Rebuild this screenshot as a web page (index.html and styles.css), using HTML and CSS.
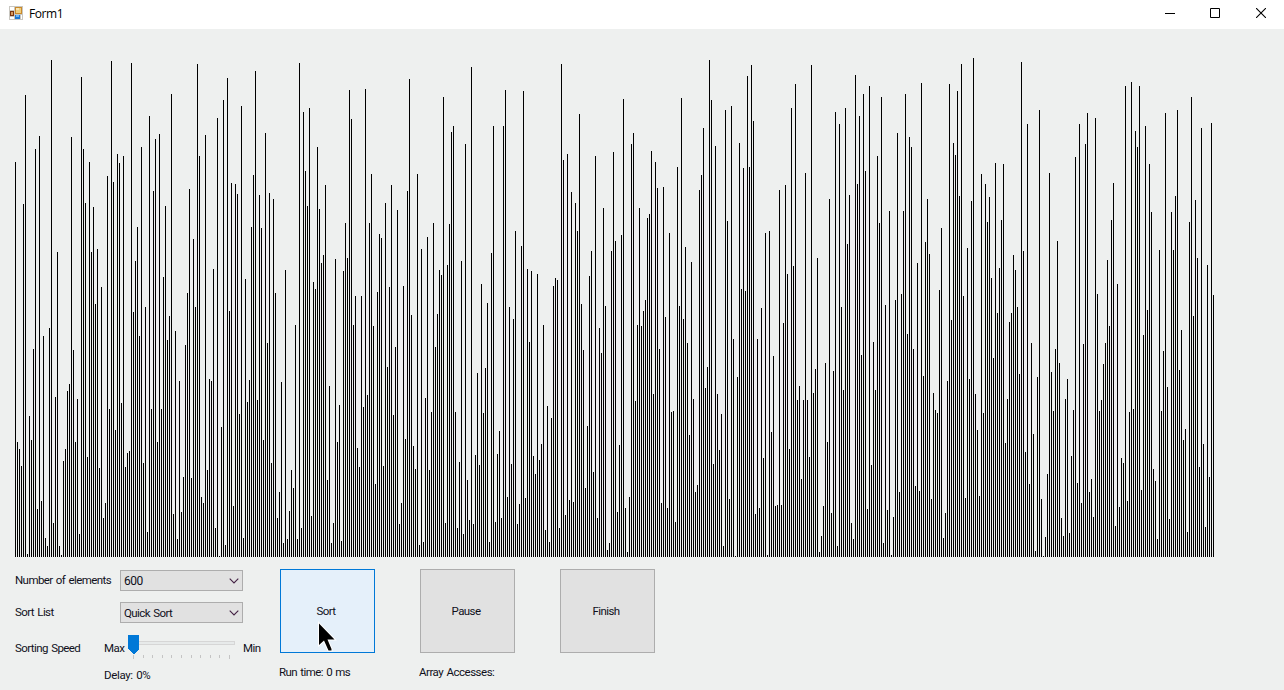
FILE: index.html
```html
<!DOCTYPE html>
<html lang="en">
<head>
<meta charset="utf-8">
<title>Form1</title>
<link rel="stylesheet" href="styles.css">
</head>
<body>
<div class="window">
  <header class="titlebar">
    <svg class="app-icon" width="14" height="14" viewBox="0 0 14 14" shape-rendering="crispEdges">
      <rect width="14" height="14" fill="#c9c7c1"/>
      <rect x="1" y="1" width="4" height="3" fill="#fff"/>
      <rect x="1" y="11" width="4" height="2" fill="#fff"/>
      <rect x="6" y="1" width="7" height="7" fill="#c98a2c"/>
      <rect x="7" y="2" width="5" height="5" fill="#f0cd7c"/>
      <rect x="7" y="2" width="3" height="2" fill="#fae6b4"/>
      <rect x="1" y="5" width="4" height="5" fill="#7a3510"/>
      <rect x="2" y="6" width="2" height="3" fill="#d89a5c"/>
      <rect x="6" y="9" width="5" height="4" fill="#1c76d2"/>
      <rect x="7" y="9" width="3" height="2" fill="#6db4f2"/>
      <rect x="12" y="9" width="1" height="4" fill="#fff"/>
    </svg>
    <span class="title">Form1</span>
    <div class="caption-buttons">
      <svg width="10" height="10" viewBox="0 0 10 10"><path d="M0 5.5H10" stroke="#000"/></svg>
      <svg width="10" height="10" viewBox="0 0 10 10"><path d="M.5 .5H9.5V9.5H.5Z" fill="none" stroke="#000"/></svg>
      <svg width="10" height="10" viewBox="0 0 10 10"><path d="M0 0L10 10M10 0L0 10" stroke="#000" stroke-width="1.1"/></svg>
    </div>
  </header>
  <main>
    <div class="plot" id="plot"></div>
    <section class="controls">
      <div class="settings">
        <div class="row">
          <span class="label name">Number of elements</span>
          <div class="combo"><span class="num">600</span><svg width="10" height="6" viewBox="0 0 10 6"><path d="M.7 .7L5 5L9.3 .7" fill="none" stroke="#442244" stroke-width="1.1"/></svg></div>
        </div>
        <div class="row">
          <span class="label list">Sort List</span>
          <div class="combo"><span class="quick">Quick Sort</span><svg width="10" height="6" viewBox="0 0 10 6"><path d="M.7 .7L5 5L9.3 .7" fill="none" stroke="#442244" stroke-width="1.1"/></svg></div>
        </div>
        <div class="speed">
          <span class="label speed-name">Sorting Speed</span>
          <span class="max">Max</span>
          <svg class="slider" width="110" height="26" viewBox="0 0 110 26" shape-rendering="crispEdges">
            <rect x="1.5" y="6.5" width="105" height="3" fill="#e7eaea" stroke="#d6d6d6"/>
            <path d="M5.5 20v4M15.5 20v3M24.5 20v3M34.5 20v3M43.5 20v3M53.5 20v3M63.5 20v3M72.5 20v3M82.5 20v3M91.5 20v3M101.5 20v4" stroke="#c4c4c4"/>
            <path d="M0 0H11V14L6 19H5L0 14Z" fill="#0078d7"/>
          </svg>
          <span class="min">Min</span>
        </div>
        <div class="delay"><span>Delay: 0%</span></div>
      </div>
      <div class="actions">
        <div class="action">
          <button class="button hot">Sort</button>
          <span class="status run">Run time: 0 ms</span>
          <svg class="cursor" width="20" height="32" viewBox="0 0 20 32"><path d="M2 2.5V24L7 19.5L11.5 29.5H14.5V28L10.5 18.5H17.5Z" fill="#000" stroke="#fff" stroke-width="2" paint-order="stroke"/></svg>
        </div>
        <div class="action">
          <button class="button">Pause</button>
          <span class="status access">Array Accesses:</span>
        </div>
        <div class="action">
          <button class="button">Finish</button>
        </div>
      </div>
    </section>
  </main>
</div>
<script src="bars.js"></script>
</body>
</html>
```
FILE: styles.css
```css
* { box-sizing: border-box; }
body {
  margin: 0;
  font: 11.5px/16px Roboto, "Liberation Sans", sans-serif;
  letter-spacing: -.58px;
  word-spacing: 1px;
  color: #10101c;
}
.window { width: 1284px; height: 690px; background: #eef0ef; overflow: hidden; }
.titlebar { height: 29px; background: #fff; display: flex; align-items: center; padding: 0 18px 3px 9px; color: #000; }
.title { margin-left: 6px; font: 12px/16px "Open Sans", "Noto Sans", sans-serif; letter-spacing: -.4px; padding-top: 2px; }
.caption-buttons { margin-left: auto; display: flex; gap: 35px; }
.caption-buttons svg:last-child { margin-left: 1px; }
.plot { height: 528px; padding-left: 15px; display: flex; align-items: flex-end; gap: 1px; }
.bar { width: 1px; flex: none; background: #000; }
.controls { display: flex; padding-top: 12px; }
.settings { width: 280px; padding: 1px 0 0 15px; }
.row { display: flex; align-items: center; height: 21px; margin-bottom: 11px; }
.label { width: 105px; white-space: nowrap; }
.row .label { padding-bottom: 1px; }
.combo { width: 123px; height: 21px; background: #e1e1e1; border: 1px solid #adadad; display: flex; align-items: center; justify-content: space-between; padding: 1px 3px 0 3px; }
.num { font-size: 12px; letter-spacing: -.5px; }
.speed { display: flex; align-items: flex-start; padding-top: 1px; height: 32px; white-space: nowrap; }
.speed > span { padding-top: 5px; }
.speed .label { width: 89px; }
.max { width: 24px; }
.slider { width: 110px; flex: none; }
.min { margin-left: 5px; }
.delay { padding: 1px 0 0 89px; letter-spacing: -.35px; }
.actions { display: flex; gap: 45px; }
.action { width: 95px; position: relative; display: flex; flex-direction: column; }
.button { width: 95px; height: 84px; border: 1px solid #adadad; background: #e1e1e1; font: inherit; letter-spacing: inherit; color: inherit; padding: 0 3px 0 0; }
.hot { border-color: #0078d7; background: #e5f0fa; }
.status { margin: 11px 0 0 -1px; white-space: nowrap; }
.access { letter-spacing: -.5px; }
.cursor { position: absolute; left: 37px; top: 52px; }
```
FILE: bars.js
```js
// Top edge of every bar, in thirds of a pixel below the top of a 507px plot.
const FLOOR = 1521;
const tops = [
  336,1176,1197,1248,462,135,1512,1098,1170,897,297,1377,258,1353,858,1464,1488,834,30,1419,1041,606,1488,1515,1233,
  1197,1023,1002,261,900,1176,1047,1452,81,297,459,1221,336,606,471,762,597,1254,711,1404,1359,378,1077,33,396,
  1140,312,339,1059,318,1251,1209,1203,39,786,633,531,858,291,1239,771,1446,198,1077,423,267,1176,252,
  1077,681,468,870,798,132,1392,843,1467,993,1386,1281,885,729,417,1284,567,771,42,318,1341,1359,255,1260,987,
  993,657,1434,204,1518,1131,150,1485,84,783,399,1368,402,432,1092,168,1464,687,1056,990,531,375,63,1050,435,
  534,1170,249,879,429,1239,447,729,1404,1326,996,1479,660,1467,1383,1260,1314,825,1467,39,1434,186,363,468,174,
  1398,696,717,291,477,639,615,405,1290,1008,1479,1419,627,1176,1065,1473,663,519,624,120,207,825,738,1194,1251,
  738,1071,117,1035,519,372,828,1302,726,552,564,1248,459,951,711,405,1095,891,480,1422,1359,708,1167,423,87,
  795,1188,1257,372,1485,597,1476,1044,561,1260,1086,519,891,792,660,675,141,1419,645,522,246,228,1086,1434,1236,
  633,1452,282,1290,1410,51,1422,1215,969,1245,702,1089,954,759,1476,609,228,1416,1212,1143,1404,228,120,1341,771,
  1242,807,543,1422,1362,588,123,1344,657,876,663,1218,1272,672,1230,1182,825,1440,1068,1476,1104,708,684,690,1434,
  42,330,1395,312,1350,426,1356,459,543,192,762,900,1314,1128,678,603,1266,318,1404,834,909,474,768,1500,1479,
  603,306,573,1386,1185,555,147,1374,1506,1341,282,249,1053,825,474,828,783,750,504,492,303,1032,336,414,897,
  1359,411,801,1374,549,1086,1083,1416,351,768,144,807,591,879,1155,636,1047,1326,1305,420,375,234,1014,951,30,
  150,1242,288,1032,1200,1092,1488,180,513,1347,168,867,1518,981,279,717,354,723,78,351,45,213,1392,867,1374,
  774,1224,549,1515,543,1146,918,1368,1365,420,1365,819,405,672,1197,174,648,102,1050,1008,1287,1050,369,1050,1221,
  45,1029,957,624,1506,1458,1368,939,1176,447,1389,963,186,1488,222,771,1020,174,582,435,1419,1467,75,402,198,
  915,132,363,1377,108,1245,876,1020,318,519,141,1479,765,1380,483,1515,1401,750,249,1326,732,483,132,852,261,
  291,897,1308,639,1323,99,978,576,447,612,1347,1029,1080,1089,720,534,1464,1389,993,102,810,279,315,123,438,
  42,738,1344,594,987,453,24,1032,1140,1338,372,1089,402,516,441,684,924,339,789,654,510,342,1179,1047,816,
  789,615,660,771,972,36,603,1206,222,1302,879,1152,1503,981,180,1347,1518,1461,1272,369,966,1083,897,573,939,
  1404,1458,1047,987,1449,1218,1080,321,1299,222,1359,882,282,189,1326,1287,1401,204,732,1083,1050,942,879,630,828,
  510,399,1428,702,1371,1224,1239,108,1353,1086,96,1077,243,291,108,1320,855,228,780,342,486,1257,1293,1467,600,
  1083,903,189,1011,1407,486,600,438,180,960,840,1170,1137,1446,516,141,798,450,624,1251,234,1182,1431,645,1281,
  219,735
];
const plot = document.getElementById("plot");
for (const top of tops) {
  const bar = document.createElement("div");
  bar.className = "bar";
  bar.style.height = (FLOOR - top) / 3 + "px";
  plot.append(bar);
}
```
